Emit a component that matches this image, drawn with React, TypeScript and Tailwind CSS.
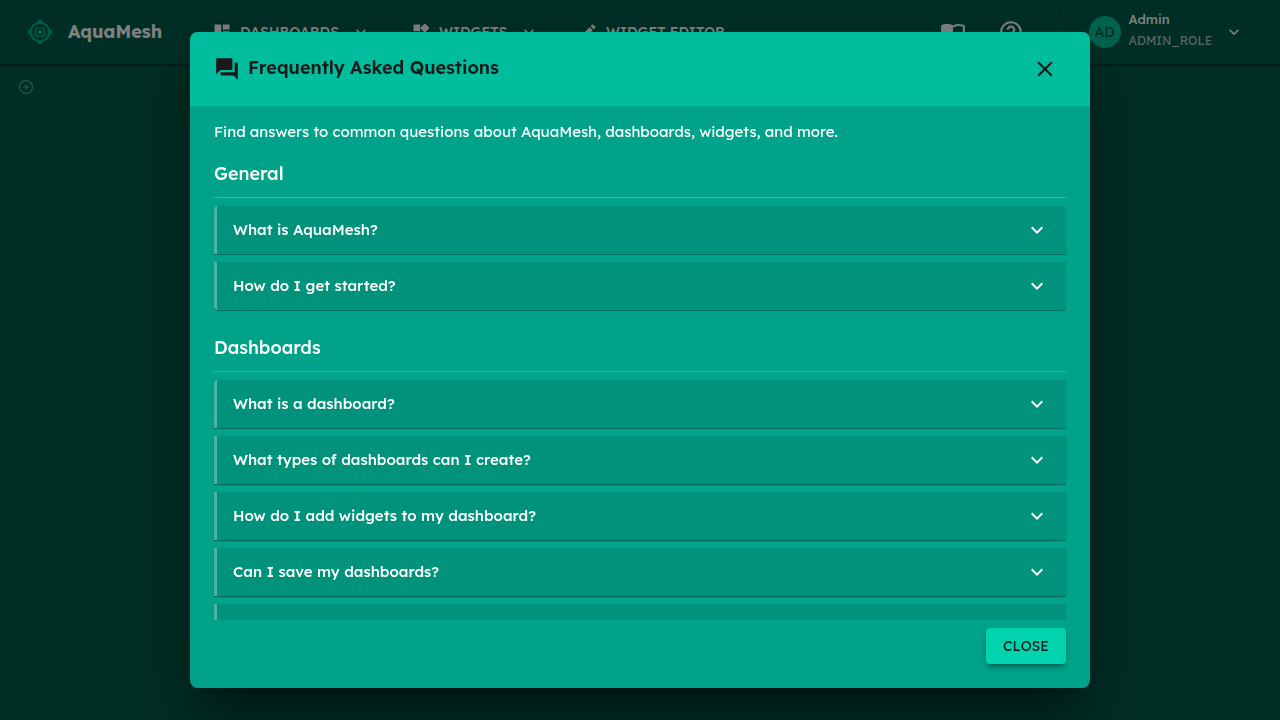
import { AiOutlinePlusCircle } from 'react-icons/ai'
import { MdClose, MdDashboard, MdEdit, MdHelpOutline, MdKeyboardArrowDown, MdQuestionAnswer, MdWidgets } from 'react-icons/md'

const sections = [
  { title: 'General', questions: ['What is AquaMesh?', 'How do I get started?'] },
  {
    title: 'Dashboards',
    questions: [
      'What is a dashboard?',
      'What types of dashboards can I create?',
      'How do I add widgets to my dashboard?',
      'Can I save my dashboards?',
      'Can I share my dashboards?',
    ],
  },
]

function Logo() {
  return (
    <svg viewBox="0 0 26 26" className="size-[26px]" fill="none" stroke="#00c49a" aria-hidden="true">
      <path d="M13 0 16.4 3.2A10.4 10.4 0 0 1 22.8 9.6L26 13 22.8 16.4A10.4 10.4 0 0 1 16.4 22.8L13 26 9.6 22.8A10.4 10.4 0 0 1 3.2 16.4L0 13 3.2 9.6A10.4 10.4 0 0 1 9.6 3.2Z" fill="#00b48c" stroke="none" />
      <circle cx="13" cy="13" r="8" fill="#005c49" stroke="none" />
      <circle cx="13" cy="13" r="5" strokeWidth="1.2" />
      <circle cx="13" cy="13" r="2.2" fill="#00c49a" stroke="none" />
    </svg>
  )
}

function BookIcon() {
  return (
    <svg viewBox="0 0 24 24" className="size-[26px]" fill="currentColor" aria-hidden="true">
      <path d="M21 5c-1.1-.35-2.3-.5-3.5-.5-1.95 0-4.05.4-5.5 1.5-1.45-1.1-3.55-1.5-5.5-1.5S2.45 4.9 1 6v14.65c0 .3.3.45.6.45 1.3-.6 3.2-1.1 4.9-1.1 1.95 0 4.05.4 5.5 1.5 1.35-.85 3.8-1.5 5.5-1.5 1.65 0 3.35.3 4.75 1.05.4.1.75-.2.75-.4V6c-.6-.45-1.25-.75-2-1Zm0 13.5c-1.1-.35-2.3-.5-3.5-.5-1.7 0-4.15.65-5.5 1.5V8c1.35-.85 3.8-1.5 5.5-1.5 1.2 0 2.4.15 3.5.5Z" />
    </svg>
  )
}

function TopBar() {
  return (
    <header className="flex h-16 items-center bg-[#005c49] pr-9 pl-[27px] text-white shadow-[0_1px_3px_rgba(0,0,0,0.5)]">
      <Logo />
      <span className="ml-[15px] w-36 text-lg font-bold">AquaMesh</span>
      <nav className="flex items-center text-sm font-medium">
        <button type="button" className="flex w-[199px] items-center gap-2">
          <MdDashboard className="size-5" />
          DASHBOARDS
          <MdKeyboardArrowDown className="ml-1 size-5" />
        </button>
        <button type="button" className="flex w-[167px] items-center gap-2">
          <MdWidgets className="size-5" />
          WIDGETS
          <MdKeyboardArrowDown className="ml-1 size-5" />
        </button>
        <button type="button" className="flex items-center gap-2">
          <MdEdit className="size-5" />
          WIDGET EDITOR
        </button>
      </nav>
      <div className="ml-auto flex items-center">
        <button type="button" aria-label="Tutorial" className="mr-8"><BookIcon /></button>
        <button type="button" aria-label="Help" className="mr-8"><MdHelpOutline className="size-[26px]" /></button>
        <span className="mr-8 h-12 w-px bg-white/5" />
        <button type="button" className="flex items-center text-left">
          <span className="grid size-8 place-items-center rounded-full bg-[#00c49a] text-sm text-[#005c49]">AD</span>
          <span className="ml-2 flex flex-col pb-1">
            <span className="text-[13px] leading-[22px] font-medium">Admin</span>
            <span className="text-xs leading-[22px] text-white/70">ADMIN_ROLE</span>
          </span>
          <MdKeyboardArrowDown className="ml-3 size-5" />
        </button>
      </div>
    </header>
  )
}

function Question({ text }: { text: string }) {
  return (
    <button
      type="button"
      aria-expanded="false"
      className="flex h-12 w-full shrink-0 items-center justify-between border-l-[3px] border-white/30 bg-[#00927a] px-4 text-left text-[15px] font-medium shadow-[0_1px_1px_rgba(0,0,0,0.35)] first:rounded-t last:rounded-b"
    >
      {text}
      <MdKeyboardArrowDown className="mr-px size-6" />
    </button>
  )
}

function FaqDialog() {
  return (
    <section
      role="dialog"
      aria-modal="true"
      aria-labelledby="faq-title"
      className="flex max-h-full w-full max-w-[900px] flex-col overflow-hidden rounded-lg bg-[#00a389] text-white shadow-2xl shadow-black/70"
    >
      <div className="flex h-[74px] shrink-0 items-center bg-[#00bd9d] px-6 text-[#191919]">
        <MdQuestionAnswer className="size-[26px]" />
        <h2 id="faq-title" className="ml-2 pb-0.5 text-lg font-semibold">Frequently Asked Questions</h2>
        <button type="button" aria-label="Close dialog" className="mr-2 ml-auto"><MdClose className="size-[26px]" /></button>
      </div>
      <div className="min-h-0 overflow-y-auto px-6 pt-3.5 [scrollbar-width:none]">
        <p className="mb-4 text-[15px] leading-6">Find answers to common questions about AquaMesh, dashboards, widgets, and more.</p>
        {sections.map((section) => (
          <div key={section.title} className="mb-6">
            <h3 className="border-b border-white/20 pb-[9px] text-lg leading-7 font-medium">{section.title}</h3>
            <div className="mt-2 flex flex-col gap-2">
              {section.questions.map((question) => <Question key={question} text={question} />)}
            </div>
          </div>
        ))}
      </div>
      <div className="flex shrink-0 justify-end px-6 pt-2 pb-6">
        <button type="button" className="h-9 min-w-20 rounded bg-[#00d3ae] px-4 text-sm text-[#191919] shadow-md shadow-black/30">CLOSE</button>
      </div>
    </section>
  )
}

export default function App() {
  return (
    <div className="min-h-screen bg-[#005a48] font-['Lexend','Inter',sans-serif]">
      <TopBar />
      <button type="button" aria-label="Add dashboard" className="mt-[15px] ml-[18px] block text-[#45b79b]"><AiOutlinePlusCircle className="size-4" /></button>
      <div className="fixed inset-0 flex items-center justify-center bg-black/50 p-8">
        <FaqDialog />
      </div>
    </div>
  )
}
